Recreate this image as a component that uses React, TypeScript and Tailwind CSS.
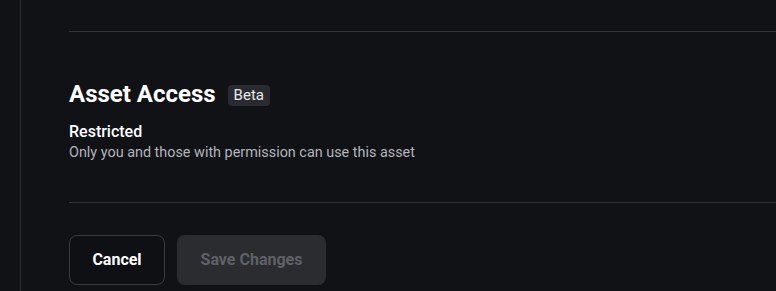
import React from 'react';

export default function App() {
  return (
    <div className="flex min-h-[291px] w-full bg-[#111216] font-['Roboto',sans-serif] overflow-hidden">
      {/* left rail */}
      <div className="w-[21px] shrink-0 border-r border-[#2c2d31]" />

      <div className="flex-1 pl-12">
        <div className="h-[32px] border-b border-[#34353a]" />

        <section className="mt-[46px]">
          <div className="flex items-center gap-3">
            <h2 className="text-2xl leading-8 font-bold text-white">Asset Access</h2>
            <span className="mt-[2px] rounded-[4px] bg-[#2a2b30] px-[6px] text-[15px] leading-[21px] text-[#e8e9ec]">
              Beta
            </span>
          </div>
          <div className="mt-[10px] text-base leading-6 font-medium text-white">Restricted</div>
          <p className="-mt-[1px] text-[14.4px] leading-5 text-[#b3b5bb]">
            Only you and those with permission can use this asset
          </p>
        </section>

        <div className="mt-[39px] border-t border-[#34353a]" />

        <div className="mt-8 flex gap-3">
          <button className="h-[50px] w-[96px] rounded-lg border border-[#3a3b40] bg-[#0f1013] text-base font-bold text-white">
            Cancel
          </button>
          <button
            disabled
            className="h-[50px] w-[149px] rounded-lg bg-[#2b2c30] text-base font-bold text-[#5f6167]"
          >
            Save Changes
          </button>
        </div>
      </div>
    </div>
  );
}
